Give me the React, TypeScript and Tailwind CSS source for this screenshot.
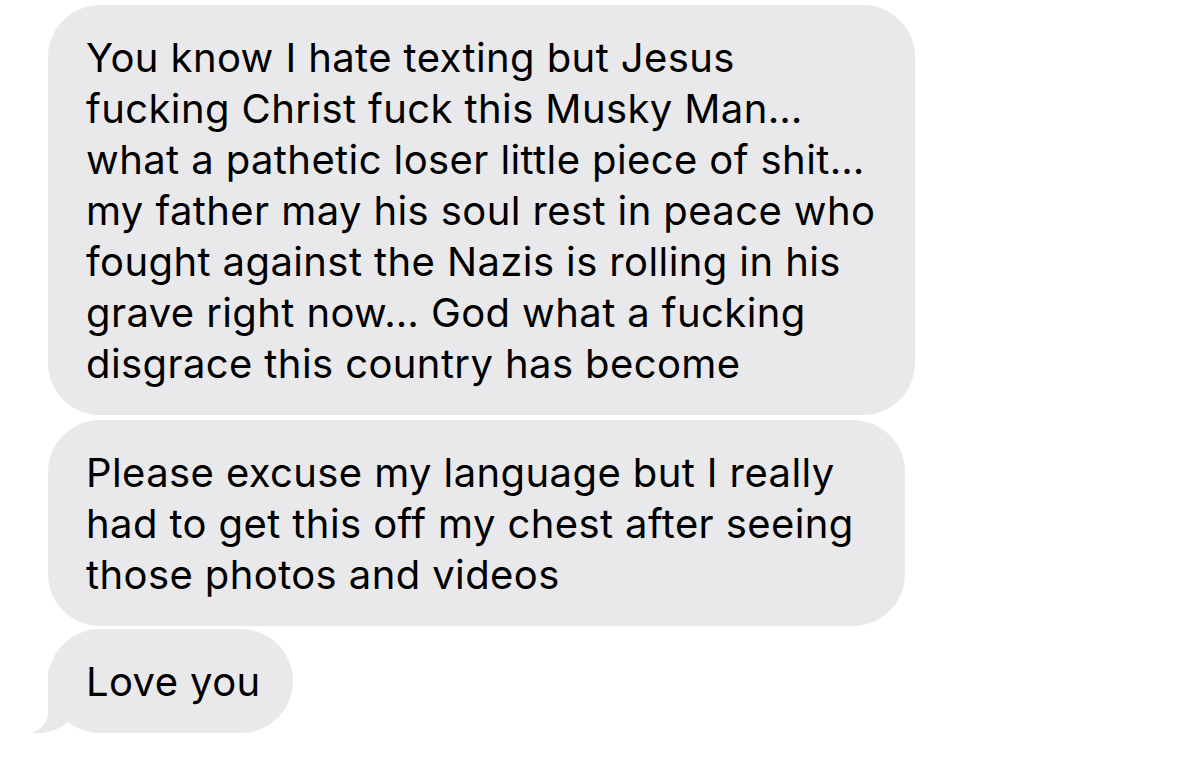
const bubbles: { lines: string[]; width: string; height: string; mt: string }[] = [
  {
    lines: [
      "You know I hate texting but Jesus",
      "fucking Christ fuck this Musky Man…",
      "what a pathetic loser little piece of shit…",
      "my father may his soul rest in peace who",
      "fought against the Nazis is rolling in his",
      "grave right now… God what a fucking",
      "disgrace this country has become",
    ],
    width: "w-[867px]",
    height: "h-[410px]",
    mt: "mt-[5px]",
  },
  {
    lines: [
      "Please excuse my language but I really",
      "had to get this off my chest after seeing",
      "those photos and videos",
    ],
    width: "w-[857px]",
    height: "h-[206px]",
    mt: "mt-[5px]",
  },
  {
    lines: ["Love you"],
    width: "w-[245px]",
    height: "h-[104px]",
    mt: "mt-[3px]",
  },
];

function Tail() {
  return (
    <svg
      className="absolute left-[-18px] top-[41px]"
      width="70"
      height="64"
      viewBox="0 0 70 64"
    >
      <path
        d="M18 0 L18 42 C18 52 12 59 2 63 C14 64.5 28 60 37 53 L60 0 Z"
        fill="#e9e9eb"
      />
    </svg>
  );
}

export default function App() {
  return (
    <div
      className="w-[1179px] h-[774px] bg-white flex flex-col items-start pl-[48px] overflow-hidden"
      style={{ fontFamily: "Inter, 'Liberation Sans', sans-serif" }}
    >
      {bubbles.map((b, i) => (
        <div
          key={i}
          className={`relative ${b.width} ${b.height} ${b.mt} rounded-[52px] bg-[#e9e9eb] pl-[38px] pt-[27px] text-[40px] leading-[51px] tracking-[0.01em] text-black`}
        >
          {b.lines.map((l) => (
            <div key={l} className="whitespace-nowrap">
              {l}
            </div>
          ))}
          {i === bubbles.length - 1 && <Tail />}
        </div>
      ))}
    </div>
  );
}
